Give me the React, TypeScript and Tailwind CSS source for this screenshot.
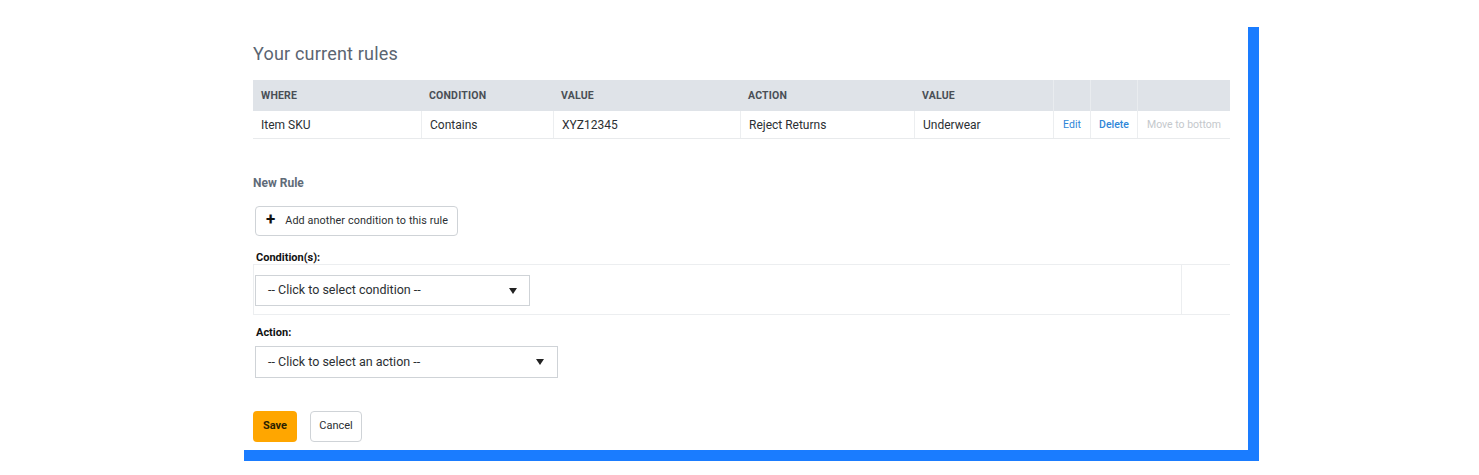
import React from "react";

const cols = [
  { label: "WHERE", w: "w-[168px]", val: "Item SKU" },
  { label: "CONDITION", w: "w-[132px]", val: "Contains" },
  { label: "VALUE", w: "w-[187px]", val: "XYZ12345" },
  { label: "ACTION", w: "w-[174px]", val: "Reject Returns" },
  { label: "VALUE", w: "w-[139px]", val: "Underwear" },
];

function Caret() {
  return (
    <svg width="8" height="6" viewBox="0 0 8 6" className="shrink-0">
      <path d="M0 0 L8 0 L4 6 Z" fill="#222" />
    </svg>
  );
}

export default function App() {
  return (
    <div
      className="w-[1479px] h-[475px] bg-white overflow-hidden"
      style={{ fontFamily: "Roboto, 'Liberation Sans', sans-serif" }}
    >
      <div className="ml-[233px] pt-[16px]">
        <div className="w-[1015px] h-[434px] bg-white shadow-[11px_11px_0_0_#1a7cff] pl-[20px] pr-[18px] pt-[42px]">
          <h1 className="text-[18px] leading-[22px] text-[#5b6571] tracking-[0.2px] -mt-[15px]">Your current rules</h1>
          <div className="mt-[15px] w-[977px]">
            <div className="flex h-[31px] bg-[#dfe3e8] text-[10.5px] font-bold text-[#4a4f56] tracking-[0.2px]">
              {cols.map((c, i) => (
                <div key={i} className={`${c.w} flex items-center pl-[8px]`}>
                  {c.label}
                </div>
              ))}
              <div className="w-[37px] border-l border-[#e9ecef]" />
              <div className="w-[47px] border-l border-[#e9ecef]" />
              <div className="flex-1 border-l border-[#e9ecef]" />
            </div>
            <div className="flex h-[28px] border-b border-[#e8eaec] text-[12px] text-[#2b2f33]">
              {cols.map((c, i) => (
                <div
                  key={i}
                  className={`${c.w} flex items-center pl-[8px] ${i > 0 ? "border-l border-[#eceef0]" : ""}`}
                >
                  {c.val}
                </div>
              ))}
              <div className="w-[37px] flex items-center justify-center border-l border-[#eceef0] text-[10.5px] text-[#2f86d8]">
                Edit
              </div>
              <div className="w-[47px] flex items-center justify-center border-l border-[#eceef0] text-[10.5px] text-[#2f86d8] font-medium">
                Delete
              </div>
              <div className="flex-1 flex items-center justify-center border-l border-[#eceef0] text-[10.5px] text-[#c4c8cc]">
                Move to bottom
              </div>
            </div>
          </div>

          <div className="mt-[37px] text-[12px] leading-[14px] font-bold text-[#5f6b78]">New Rule</div>

          <button className="mt-[16px] ml-[2px] h-[30px] w-[203px] border border-[#cfd3d7] rounded-[4px] flex items-center pl-[10px] bg-white">
            <span className="text-[17px] leading-none font-bold text-[#111] mr-[10px] -mt-[3px]">+</span>
            <span className="text-[10.8px] text-[#2b2f33] tracking-[0.1px]">Add another condition to this rule</span>
          </button>

          <div className="mt-[15px] ml-[3px] text-[11px] leading-[13px] font-bold text-[#111]">Condition(s):</div>
          <div className="h-[51px] flex border-t border-b border-l border-[#eceef0]">
            <div className="flex-1 pt-[10px] pl-[1px]">
              <div className="h-[31px] w-[275px] border border-[#cfd3d7] flex items-center justify-between pl-[12px] pr-[12px] text-[12.5px] text-[#2b2f33]">
                <span>-- Click to select condition --</span>
                <Caret />
              </div>
            </div>
            <div className="w-[49px] border-l border-[#eceef0]" />
          </div>

          <div className="mt-[11px] ml-[3px] text-[11px] leading-[13px] font-bold text-[#111]">Action:</div>
          <div className="mt-[7px] ml-[2px] h-[32px] w-[303px] border border-[#cfd3d7] flex items-center justify-between pl-[12px] pr-[13px] text-[12.5px] text-[#2b2f33]">
            <span>-- Click to select an action --</span>
            <Caret />
          </div>

          <div className="mt-[33px] flex gap-[13px]">
            <button className="h-[31px] w-[44px] rounded-[4px] bg-[#ffa600] text-[11px] font-bold text-[#2b2100]">
              Save
            </button>
            <button className="h-[31px] w-[52px] rounded-[4px] border border-[#cfd3d7] bg-white text-[11px] text-[#2b2f33]">
              Cancel
            </button>
          </div>
        </div>
      </div>
    </div>
  );
}
